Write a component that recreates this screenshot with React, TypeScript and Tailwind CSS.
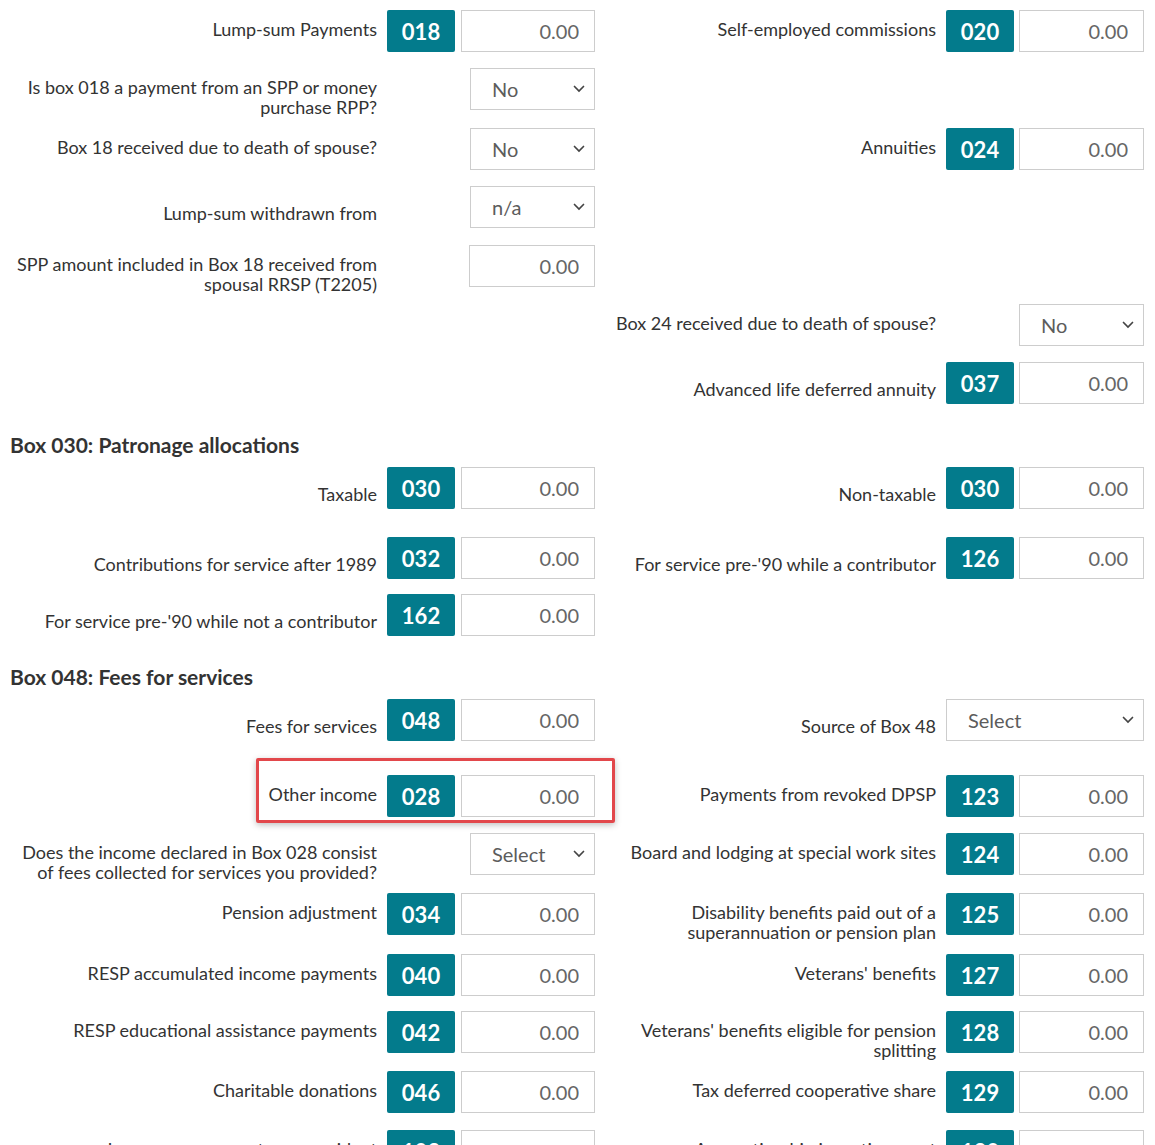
import React from "react";

type Cell = {
  label?: React.ReactNode;
  code?: string;
  kind?: "input" | "select" | "wide";
  value?: string;
  low?: boolean;
  highlight?: boolean;
};

type Row = { mt: string; left?: Cell; right?: Cell } | { mt: string; heading: string };

const rows: Row[] = [
  {
    mt: "mt-[10px]",
    left: { label: "Lump-sum Payments", code: "018" },
    right: { label: "Self-employed commissions", code: "020" },
  },
  {
    mt: "mt-[16px]",
    left: {
      label: (
        <>
          Is box 018 a payment from an SPP or money
          <br />
          purchase RPP?
        </>
      ),
      kind: "select",
      value: "No",
    },
  },
  {
    mt: "mt-[11px]",
    left: { label: "Box 18 received due to death of spouse?", kind: "select", value: "No" },
    right: { label: "Annuities", code: "024" },
  },
  {
    mt: "mt-[16px]",
    left: { label: "Lump-sum withdrawn from", kind: "select", value: "n/a", low: true },
  },
  {
    mt: "mt-[17px]",
    left: {
      label: (
        <>
          SPP amount included in Box 18 received from
          <br />
          spousal RRSP (T2205)
        </>
      ),
    },
  },
  {
    mt: "mt-[10px]",
    right: { label: "Box 24 received due to death of spouse?", kind: "select", value: "No" },
  },
  {
    mt: "mt-[16px]",
    right: { label: "Advanced life deferred annuity", code: "037", low: true },
  },
  { mt: "mt-[29px]", heading: "Box 030: Patronage allocations" },
  {
    mt: "mt-[10px]",
    left: { label: "Taxable", code: "030", low: true },
    right: { label: "Non-taxable", code: "030", low: true },
  },
  {
    mt: "mt-[28px]",
    left: { label: "Contributions for service after 1989", code: "032", low: true },
    right: { label: "For service pre-'90 while a contributor", code: "126", low: true },
  },
  {
    mt: "mt-[15px]",
    left: { label: "For service pre-'90 while not a contributor", code: "162", low: true },
  },
  { mt: "mt-[29px]", heading: "Box 048: Fees for services" },
  {
    mt: "mt-[10px]",
    left: { label: "Fees for services", code: "048", low: true },
    right: { label: "Source of Box 48", kind: "wide", value: "Select", low: true },
  },
  {
    mt: "mt-[34px]",
    left: { label: "Other income", code: "028", highlight: true },
    right: { label: "Payments from revoked DPSP", code: "123" },
  },
  {
    mt: "mt-[16px]",
    left: {
      label: (
        <>
          Does the income declared in Box 028 consist
          <br />
          of fees collected for services you provided?
        </>
      ),
      kind: "select",
      value: "Select",
    },
    right: { label: "Board and lodging at special work sites", code: "124" },
  },
  {
    mt: "mt-[11px]",
    left: { label: "Pension adjustment", code: "034" },
    right: {
      label: (
        <>
          Disability benefits paid out of a
          <br />
          superannuation or pension plan
        </>
      ),
      code: "125",
    },
  },
  {
    mt: "mt-[12px]",
    left: { label: "RESP accumulated income payments", code: "040" },
    right: { label: "Veterans' benefits", code: "127" },
  },
  {
    mt: "mt-[15px]",
    left: { label: "RESP educational assistance payments", code: "042" },
    right: {
      label: (
        <>
          Veterans' benefits eligible for pension
          <br />
          splitting
        </>
      ),
      code: "128",
    },
  },
  {
    mt: "mt-[11px]",
    left: { label: "Charitable donations", code: "046" },
    right: { label: "Tax deferred cooperative share", code: "129" },
  },
  {
    mt: "mt-[17px]",
    left: { label: "Lump-sum payments non-resident", code: "102", value: "" },
    right: { label: "Apprenticeship incentive grant", code: "130" },
  },
];

function Chevron() {
  return (
    <svg
      className="pointer-events-none absolute right-[10px] top-1/2 -translate-y-1/2"
      width="12"
      height="8"
      viewBox="0 0 12 8"
      fill="none"
    >
      <path d="M1.5 1.5 6 6l4.5-4.5" stroke="#444" strokeWidth="1.7" strokeLinecap="round" />
    </svg>
  );
}

function Select({ value, wide }: { value: string; wide?: boolean }) {
  return (
    <div className={`relative h-[42px] ${wide ? "w-[198px]" : "w-[125px]"}`}>
      <select
        defaultValue={value}
        className="h-full w-full appearance-none border border-[#cdcdcd] bg-white pl-[21px] text-[20px] text-[#5c5c5c] outline-none"
      >
        <option>{value}</option>
      </select>
      <Chevron />
    </div>
  );
}

function Amount({ value, className }: { value: string; className: string }) {
  return (
    <input
      readOnly
      value={value}
      className={`h-[42px] border border-[#cdcdcd] bg-white pr-[15px] text-right text-[20px] text-[#666] outline-none ${className}`}
    />
  );
}

function Field({ cell, side }: { cell?: Cell; side: "left" | "right" }) {
  const isLeft = side === "left";
  if (!cell) return <div className={isLeft ? "w-[595px]" : "w-[549px]"} />;
  const kind = cell.kind ?? "input";
  const value = cell.value ?? "0.00";

  return (
    <div className={`relative flex items-start ${isLeft ? "w-[595px]" : "w-[549px]"}`}>
      <div
        className={`text-right leading-[20px] text-[#333] ${isLeft ? "w-[377px]" : "w-[341px]"} ${
          cell.low ? "pt-[17px]" : "pt-[9px]"
        }`}
      >
        {cell.label}
      </div>
      <div className={`ml-[10px] flex justify-end ${isLeft ? "w-[208px]" : "w-[198px]"}`}>
        {kind === "select" && <Select value={value} />}
        {kind === "wide" && <Select value={value} wide />}
        {kind === "input" && cell.code && (
          <div className={`flex ${isLeft ? "gap-[6px]" : "gap-[5px]"}`}>
            <span className="flex h-[42px] w-[68px] items-center justify-center rounded-[2px] bg-[#037b8c] text-[22px] font-bold text-white">
              {cell.code}
            </span>
            <Amount value={value} className={isLeft ? "w-[134px]" : "w-[125px]"} />
          </div>
        )}
        {kind === "input" && !cell.code && <Amount value={value} className="w-[126px]" />}
      </div>
      {cell.highlight && (
        <div className="pointer-events-none absolute left-[256px] top-[-17px] h-[65px] w-[359px] rounded-[2px] border-[3px] border-[#e2474b] shadow-[0_2px_6px_rgba(0,0,0,0.25)]" />
      )}
    </div>
  );
}

export default function App() {
  return (
    <div className="h-[1145px] w-[1155px] overflow-hidden bg-white font-['Lato','Liberation_Sans',sans-serif] text-[18px]">
      {rows.map((row, i) =>
        "heading" in row ? (
          <h2 key={i} className={`${row.mt} pl-[10px] text-[21px] font-bold leading-[24px] text-[#333]`}>
            {row.heading}
          </h2>
        ) : (
          <div key={i} className={`${row.mt} flex`}>
            <Field cell={row.left} side="left" />
            <Field cell={row.right} side="right" />
          </div>
        )
      )}
    </div>
  );
}
